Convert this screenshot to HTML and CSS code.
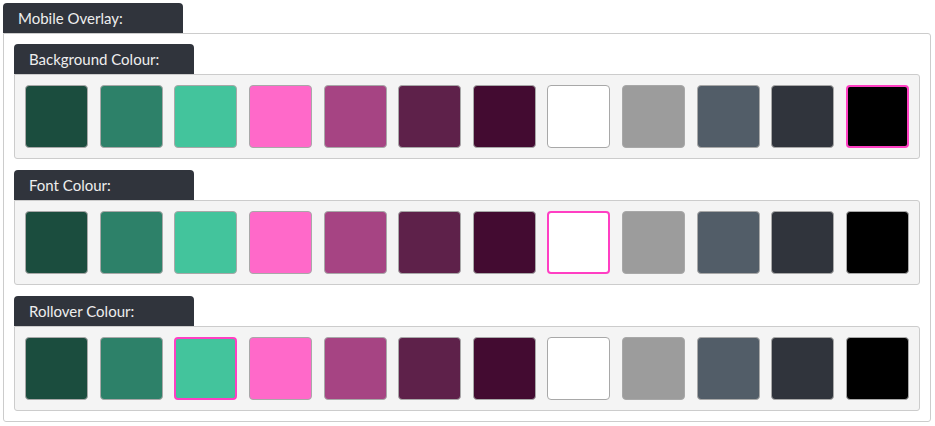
FILE: index.html
```html
<!DOCTYPE html>
<html>
<head>
<meta charset="utf-8">
<link rel="stylesheet" href="styles.css">
</head>
<body>
<div class="group">
  <div class="tab">Mobile Overlay:</div>
  <div class="box">
    <div class="section">
      <div class="tab">Background Colour:</div>
      <div class="swatches">
        <span class="sw c1"></span><span class="sw c2"></span><span class="sw c3"></span><span class="sw c4"></span><span class="sw c5"></span><span class="sw c6"></span><span class="sw c7"></span><span class="sw c8"></span><span class="sw c9"></span><span class="sw c10"></span><span class="sw c11"></span><span class="sw c12 sel"></span>
      </div>
    </div>
    <div class="section">
      <div class="tab">Font Colour:</div>
      <div class="swatches">
        <span class="sw c1"></span><span class="sw c2"></span><span class="sw c3"></span><span class="sw c4"></span><span class="sw c5"></span><span class="sw c6"></span><span class="sw c7"></span><span class="sw c8 sel"></span><span class="sw c9"></span><span class="sw c10"></span><span class="sw c11"></span><span class="sw c12"></span>
      </div>
    </div>
    <div class="section">
      <div class="tab">Rollover Colour:</div>
      <div class="swatches">
        <span class="sw c1"></span><span class="sw c2"></span><span class="sw c3 sel"></span><span class="sw c4"></span><span class="sw c5"></span><span class="sw c6"></span><span class="sw c7"></span><span class="sw c8"></span><span class="sw c9"></span><span class="sw c10"></span><span class="sw c11"></span><span class="sw c12"></span>
      </div>
    </div>
  </div>
</div>
</body>
</html>
```
FILE: styles.css
```css
html, body { background: #fff; }
body {
  margin: 3px;
  font-family: Lato, "Liberation Sans", sans-serif;
  font-size: 15px;
  width: 928px;
}
.tab {
  width: 180px;
  height: 30px;
  box-sizing: border-box;
  padding-left: 15px;
  line-height: 30px;
  background: #30343c;
  color: #eeeeee;
  border-radius: 4px 4px 0 0;
}
.box {
  border: 1px solid #cccccc;
  border-radius: 0 3px 3px 3px;
  padding: 10px;
  display: flex;
  flex-direction: column;
  gap: 11px;
}
.swatches {
  background: #f4f4f4;
  border: 1px solid #cccccc;
  border-radius: 0 3px 3px 3px;
  padding: 10px;
  display: flex;
  justify-content: space-between;
}
.sw {
  width: 63px;
  height: 63px;
  box-sizing: border-box;
  border: 1px solid #a8a8a8;
  border-radius: 4px;
  display: block;
}
.sw.sel { border: 2px solid #ff3fc3; }
.c1 { background: #1b4d3e; }
.c2 { background: #2d8169; }
.c3 { background: #43c49c; }
.c4 { background: #ff69c9; }
.c5 { background: #a64483; }
.c6 { background: #5e214a; }
.c7 { background: #430b31; }
.c8 { background: #ffffff; }
.c9 { background: #9c9c9c; }
.c10 { background: #525d68; }
.c11 { background: #30343c; }
.c12 { background: #000000; }
```
